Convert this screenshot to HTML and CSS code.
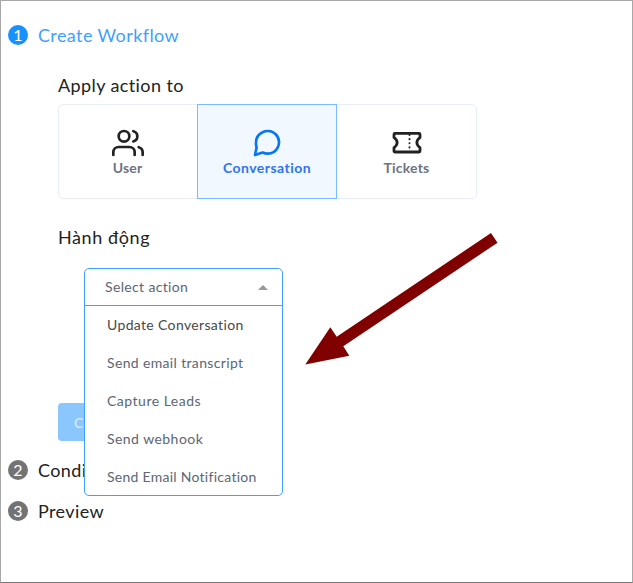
FILE: index.html
```html
<!DOCTYPE html>
<html lang="vi">
<head>
<meta charset="utf-8">
<title>Create Workflow</title>
<link rel="stylesheet" href="styles.css">
</head>
<body>
<main class="page">
  <section class="step active">
    <span class="badge">1</span>
    <h2 class="title create">Create Workflow</h2>
  </section>
  <div class="content">
    <h3 class="label apply">Apply action to</h3>
    <div class="cards">
      <div class="card">
        <svg viewBox="0 0 24 24"><circle cx="9" cy="7" r="4"/><path d="M17 21v-2a4 4 0 0 0-4-4H5a4 4 0 0 0-4 4v2M23 21v-2a4 4 0 0 0-3-3.87M16 3.13a4 4 0 0 1 0 7.75"/></svg>
        <span class="user">User</span>
      </div>
      <div class="card selected">
        <svg viewBox="0 0 24 24"><path d="M21 11.5a8.4 8.4 0 0 1-.9 3.8 8.5 8.5 0 0 1-7.6 4.7 8.4 8.4 0 0 1-3.8-.9L3 21l1.2-5.7a8.4 8.4 0 0 1-.4-3.8 8.5 8.5 0 0 1 4.9-7.6 8.4 8.4 0 0 1 3.8-.9h.5a8.5 8.5 0 0 1 8 8z"/></svg>
        <span class="conversation">Conversation</span>
      </div>
      <div class="card">
        <svg viewBox="0 0 32 32"><path class="ticket" d="M4 6.400h24q1 0 1 1v3.200c-4.200 2.800-4.200 7.200 0 10v3.400q0 1-1 1H4q-1 0-1-1v-3.400c4.200-2.800 4.200-7.200 0-10v-3.200q0-1 1-1z"/><path class="perforation" d="M18.500 8v16"/></svg>
        <span class="tickets">Tickets</span>
      </div>
    </div>
    <h3 class="label action">Hành động</h3>
    <div class="form">
      <div class="select">
        <div class="control"><span>Select action</span><i class="caret"></i></div>
        <ul class="menu">
          <li class="hovered">Update Conversation</li>
          <li class="transcript">Send email transcript</li>
          <li class="leads">Capture Leads</li>
          <li class="webhook">Send webhook</li>
          <li class="notification">Send Email Notification</li>
        </ul>
      </div>
    </div>
    <button class="continue">C</button>
  </div>
  <section class="step second">
    <span class="badge">2</span>
    <h2 class="title">Condi</h2>
  </section>
  <section class="step third">
    <span class="badge">3</span>
    <h2 class="title preview">Preview</h2>
  </section>
  <svg class="arrow" viewBox="0 0 194 136"><path d="M187 3L193.500 12.700L39.300 116.300L45.300 125.700L1.300 134.500L26.300 97.300L32.700 106.700Z"/></svg>
</main>
</body>
</html>
```
FILE: styles.css
```css
* { box-sizing: border-box; }
body { margin: 0; background: #fff; font-family: Lato, "Noto Sans", sans-serif; }
.page { position: relative; width: 633px; height: 583px; overflow: hidden; padding: 22px 7px 0; border: 1px solid #a8a8a8; border-bottom-color: #777; }
.step { display: flex; align-items: center; gap: 10px; height: 24px; }
.badge { width: 20px; height: 20px; border-radius: 50%; background: #737373; color: #fff; font-size: 16px; line-height: 20px; text-align: center; }
.title, .label { margin: 0; font-weight: 400; font-size: 18px; line-height: 24px; color: #222; letter-spacing: .4px; }
.active .badge { background: #1890ff; }
.active .title { color: #3f9fff; }
.content { margin: 26px 0 0 50px; }
.action { letter-spacing: .6px; }
.cards { display: grid; grid-template-columns: 139px 140px 138px; width: 419px; height: 95px; margin-top: 7px; border: 1px solid #e6eff7; border-radius: 5px; }
.card { display: flex; flex-direction: column; align-items: center; padding-top: 22px; font-size: 14px; font-weight: 700; line-height: 18px; letter-spacing: .2px; color: #6e7280; }
.card:first-child { margin-right: 2px; }
.card:last-child { margin-right: 1px; }
.card svg { width: 32px; height: 32px; fill: none; stroke: #222; stroke-width: 2; stroke-linecap: round; stroke-linejoin: round; }
.card .ticket { stroke-width: 2.8; }
.card .perforation { stroke-width: 2; stroke-dasharray: .1 4; }
.selected { margin: -1px 1px -1px -1px; border: 1px solid #7abaff; background: #f1f8ff; color: #2f74ee; }
.conversation { letter-spacing: .45px; }
.selected svg { stroke: #0875f2; }
.action { margin-top: 26px; }
.form { height: 137px; padding: 19px 0 0 26px; }
.select { position: relative; z-index: 2; width: 199px; height: 228px; border: 1px solid #40a0ff; border-radius: 5px; background: #fff; font-size: 14px; letter-spacing: .35px; color: #5b6675; }
.control { display: flex; align-items: center; justify-content: space-between; height: 37px; padding: 0 14px 0 20px; border-bottom: 1px solid #40a0ff; }
.control span { padding-bottom: 2px; }
.caret { border: 5px solid transparent; border-top: 0; border-bottom-color: #999; }
.menu { list-style: none; margin: 0; padding: 0 0 0 22px; }
.menu li { height: 38px; line-height: 37px; white-space: nowrap; }
.menu .hovered { color: #484848; }
.menu .leads { letter-spacing: .5px; }
.menu .webhook { letter-spacing: .45px; }
.menu .notification { letter-spacing: .27px; }
.continue { display: block; width: 103px; height: 38px; margin: 17px 0 0; border: 0; border-radius: 4px; background: #8bc6ff; color: #e1f1ff; font: 14px Lato, sans-serif; padding: 0 0 0 16px; text-align: left; }
.second { margin-top: 17px; }
.third { margin-top: 17px; }
.arrow { position: absolute; left: 303px; top: 229px; width: 194px; height: 136px; fill: #800000; }
```
